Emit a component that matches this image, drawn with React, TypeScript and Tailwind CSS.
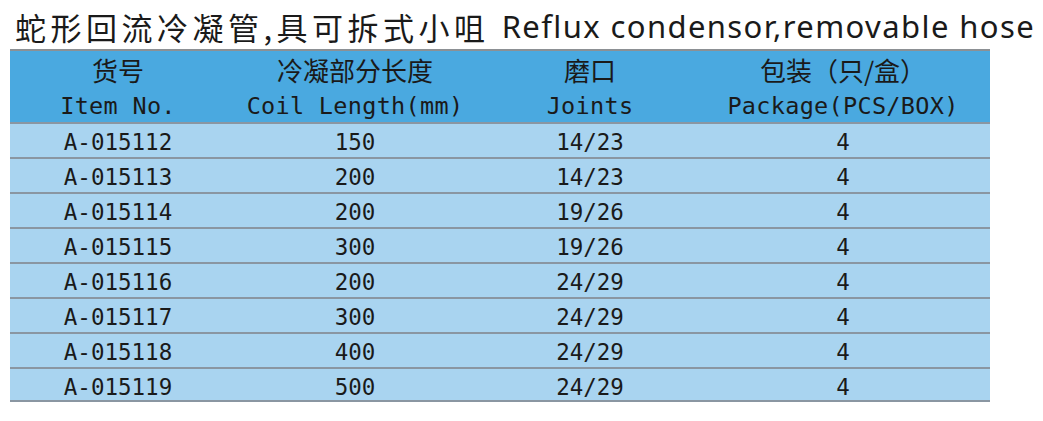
const rows = [
  { item: 'A-015112', length: '150', joint: '14/23', pack: '4' },
  { item: 'A-015113', length: '200', joint: '14/23', pack: '4' },
  { item: 'A-015114', length: '200', joint: '19/26', pack: '4' },
  { item: 'A-015115', length: '300', joint: '19/26', pack: '4' },
  { item: 'A-015116', length: '200', joint: '24/29', pack: '4' },
  { item: 'A-015117', length: '300', joint: '24/29', pack: '4' },
  { item: 'A-015118', length: '400', joint: '24/29', pack: '4' },
  { item: 'A-015119', length: '500', joint: '24/29', pack: '4' },
];

const cjk = "font-['Noto_Sans_CJK_SC',sans-serif]";
const mono = "font-['DejaVu_Sans_Mono','Noto_Sans_CJK_SC',monospace]";
const cols = 'grid grid-cols-[216px_258px_212px_1fr] text-center';

const headCn = `${cjk} text-[26px] leading-[36px]`;
const headEn = `${mono} text-[23.5px] tracking-[0.3px] leading-[36px] whitespace-pre`;

export default function App() {
  return (
    <div className="w-[1043px] h-[421px] bg-white text-[#1a1a1a]">
      <div className="h-[49px] flex items-end pb-[7px] pl-[15px] whitespace-nowrap">
        <span className={`${cjk} text-[31px] leading-none tracking-[4.5px]`}>
          蛇形回流冷凝管,具可拆式小咀
        </span>
        <span className="ml-[12px] font-['Noto_Sans',sans-serif] text-[31px] leading-none tracking-[1.4px]">
          Reflux condensor,removable hose
        </span>
      </div>

      <div className="ml-[10px] w-[980px] border-t-2 border-[#8c9094]">
        <div className={`${cols} h-[71px] bg-[#4aa9e0] pt-[1px]`}>
          <div>
            <div className={headCn}>货号</div>
            <div className={headEn}>Item No.</div>
          </div>
          <div>
            <div className={headCn}>冷凝部分长度</div>
            <div className={headEn}>Coil Length(mm)</div>
          </div>
          <div>
            <div className={headCn}>磨口</div>
            <div className={headEn}>Joints</div>
          </div>
          <div>
            <div className={headCn}>包装（只/盒）</div>
            <div className={headEn}>Package(PCS/BOX)</div>
          </div>
        </div>

        {rows.map((r, i) => (
          <div
            key={r.item}
            className={`${cols} ${mono} h-[35px] pt-[2px] bg-[#a9d4f0] border-t-2 border-[#8a96a2] text-[22.5px] leading-[33px] ${
              i === rows.length - 1 ? 'border-b-2' : ''
            }`}
          >
            <div>{r.item}</div>
            <div>{r.length}</div>
            <div>{r.joint}</div>
            <div>{r.pack}</div>
          </div>
        ))}
      </div>
    </div>
  );
}
